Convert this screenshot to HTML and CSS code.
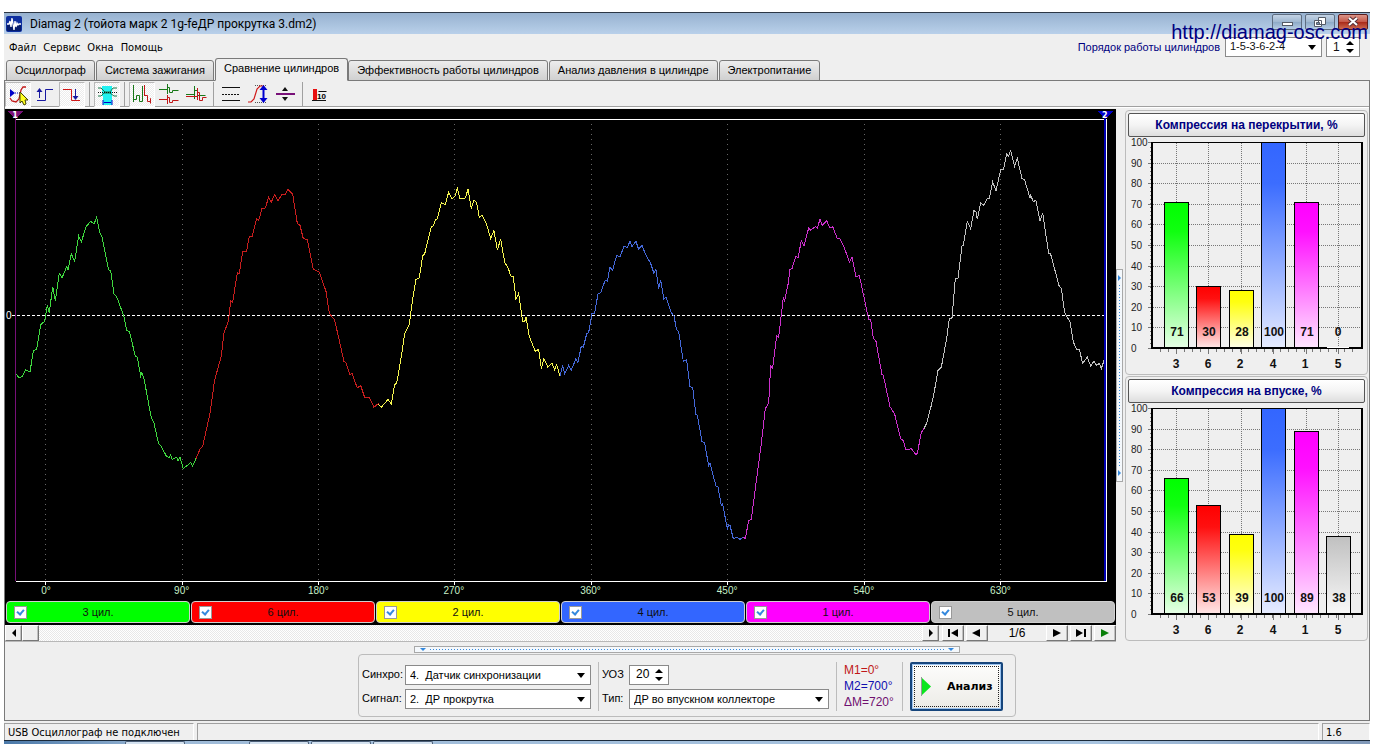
FILE: index.html
```html
<!DOCTYPE html>
<html lang="ru">
<head>
<meta charset="utf-8">
<title>Diamag 2</title>
<link rel="stylesheet" href="styles.css">
</head>
<body>
<div class="app">
  <header class="titlebar">
    <svg class="app-icon" width="16" height="16" viewBox="0 0 16 16"><rect width="16" height="16" rx="2" fill="#0d2fa0"/><rect x="1" y="9" width="14" height="6" fill="#061c6c"/><path d="M1 8h2l1-3 1 6 1-9 2 12 1-9 1 6 1-4 1 2 1-1h2" fill="none" stroke="#fff" stroke-width="1.3"/></svg>
    <h1 class="title">Diamag 2 (тойота марк 2 1g-feДР прокрутка 3.dm2)</h1>
    <div class="win-buttons">
      <button class="win-btn" aria-label="Свернуть"><svg width="28" height="14"><rect x="9.500" y="7.500" width="10" height="3" fill="#fff" stroke="#555b66"/></svg></button>
      <button class="win-btn" aria-label="Восстановить"><svg width="28" height="14"><path d="M12.500 2.500h7v7h-7zM8.500 5.500h7v6h-7z" fill="#fff" stroke="#555b66"/><path d="M10.500 7.500h3v2h-3z" fill="#7790ac" stroke="#555b66"/></svg></button>
      <button class="win-btn win-close" aria-label="Закрыть"><svg width="28" height="14"><path d="M10 3l8 7M18 3l-8 7" stroke="#553038" stroke-width="4"/><path d="M10 3l8 7M18 3l-8 7" stroke="#fff" stroke-width="2"/></svg></button>
    </div>
    <a class="watermark" href="#">http://diamag-osc.com</a>
  </header>

  <div class="menu-row">
    <nav class="menu">
      <button>Файл</button><button>Сервис</button><button>Окна</button><button>Помощь</button>
    </nav>
    <div class="order">
      <label for="order">Порядок работы цилиндров</label>
      <span class="select order-select"><select id="order"><option>1-5-3-6-2-4</option></select></span>
      <span class="spin order-spin"><input type="text" value="1" aria-label="Номер цилиндра"><span class="arrows"><button class="up" aria-label="Больше"></button><button class="down" aria-label="Меньше"></button></span></span>
    </div>
  </div>

  <div class="tabs" role="tablist">
    <button class="tab" role="tab">Осциллограф</button>
    <button class="tab" role="tab">Система зажигания</button>
    <button class="tab active" role="tab" aria-selected="true">Сравнение цилиндров</button>
    <button class="tab" role="tab">Эффективность работы цилиндров</button>
    <button class="tab" role="tab">Анализ давления в цилиндре</button>
    <button class="tab" role="tab">Электропитание</button>
  </div>

  <main class="page">
    <div class="toolbar">
      <button class="tool pressed" aria-label="Маркер"><svg width="24" height="24" viewBox="0 0 24 24"><path d="M4 6v8l5-4z" fill="#0000c8"/><path d="M9 10h6" stroke="#0000c8" stroke-dasharray="1 1"/><path d="M20 4h-3l-2 3-2 9-3 3-4-1-2-3" fill="none" stroke="#c01818" stroke-width="1.300"/><path d="M14 9v11l2-2 2 4 2-1-1-4h3z" fill="#ffff20" stroke="#444400"/></svg></button>
      <button class="tool" aria-label="Фронт"><svg width="24" height="24" viewBox="0 0 24 24"><path d="M4 18.500h8.500v-11H20M6.500 16V9" fill="none" stroke="#1818a0"/><path d="M6.500 6l3 4h-6z" fill="#1818a0"/></svg></button>
      <button class="tool pressed" aria-label="Спад"><svg width="24" height="24" viewBox="0 0 24 24"><path d="M3 6.500h8.500v11H20" fill="none" stroke="#d01818"/><path d="M15.500 6v8" stroke="#1818a0"/><path d="M15.500 17l3-4h-6z" fill="#1818a0"/></svg></button>
      <i class="sep"></i>
      <button class="tool pressed" aria-label="Область"><svg width="24" height="24" viewBox="0 0 24 24"><path d="M7 3h10v10H7zM8 13h9v9H8z" fill="#20f0f0"/><path d="M3 5h3l4 4h5l3-4h4M3 13h3l3-3h6l4 3h3" fill="none" stroke="#187848"/><path d="M3 9.500h19" stroke="#111" stroke-dasharray="1 1"/><path d="M8 17v5M17 17v5M9 19.500h7" stroke="#0000c8"/></svg></button>
      <i class="sep"></i>
      <button class="tool pressed" aria-label="Последовательно"><svg width="24" height="24" viewBox="0 0 24 24"><path d="M3.500 2v17M3.500 16.500h3v-4h3v6h3V3" fill="none" stroke="#187818"/><path d="M14.500 2v11M14.500 12.500h3v6h3v-3v5" fill="none" stroke="#c01818"/></svg></button>
      <button class="tool" aria-label="Раздельно"><svg width="24" height="24" viewBox="0 0 24 24"><path d="M2 7.500h8M10.500 2v10M10.500 5.500h2v5h3v-2h6" fill="none" stroke="#187818"/><path d="M2 17.500h8M10.500 13v9M10.500 15.500h2v5h3v-2h6" fill="none" stroke="#c01818"/></svg></button>
      <button class="tool" aria-label="Наложение"><svg width="24" height="24" viewBox="0 0 24 24"><path d="M2 12.500h8M10.500 4v13M10.500 8.500h3v5h8" fill="none" stroke="#187818"/><path d="M2 14.500h11M13.500 6v12M13.500 10.500h2v8h3v-3h4" fill="none" stroke="#c01818"/></svg></button>
      <i class="sep"></i>
      <button class="tool" aria-label="Линии"><svg width="24" height="24" viewBox="0 0 24 24"><path d="M3 5.500h18M3 18.500h18" stroke="#111"/><path d="M3 12.500h18" stroke="#111" stroke-dasharray="2 1"/></svg></button>
      <button class="tool" aria-label="Масштаб"><svg width="24" height="24" viewBox="0 0 24 24"><path d="M9 3.500h12M9 20.500h12" stroke="#555" stroke-dasharray="1 1"/><path d="M2 20h3l3-3 3-10 3-3h4" fill="none" stroke="#d01818" stroke-width="1.200"/><path d="M17.500 7v10" stroke="#0000d0" stroke-width="2"/><path d="M17.500 3l4 5h-8zM17.500 21l4-5h-8z" fill="#0000d0"/></svg></button>
      <button class="tool" aria-label="Сжать"><svg width="24" height="24" viewBox="0 0 24 24"><path d="M3 12h19" stroke="#781078" stroke-width="2"/><path d="M12 5l3 4H9zM12 19l3-4H9z" fill="#111"/></svg></button>
      <i class="sep"></i>
      <button class="tool" aria-label="Десять"><svg width="24" height="24" viewBox="0 0 24 24"><path d="M5 7h4v11H5z" fill="#e81010"/><path d="M4 18.500h14M10.500 9.500h8" stroke="#111"/><text x="9" y="17" class="ten">10</text></svg></button>
    </div>

    <div class="workspace">
      <section class="scope">
        <div class="plot">
          <svg class="wave" viewBox="5 109 1111 491" preserveAspectRatio="none">
            <g class="grid"><path d="M45.500 124V581M182.500 124V581M318.500 124V581M454.500 124V581M591.500 124V581M727.500 124V581M864.500 124V581M1000.500 124V581"/></g>
            <path class="frame" d="M45.500 581v4M182.500 581v4M318.500 581v4M454.500 581v4M591.500 581v4M727.500 581v4M864.500 581v4M1000.500 581v4"/>
            <path class="frame" d="M16 119.500H1106.500V581.500H16"/>
            <path class="zero" d="M12 315.500H1106"/>
            <path class="mark-one" d="M15.500 117V581"/>
            <path class="mark-two" d="M1105 117V581"/>
            <path d="M8 111h15l-7.500 8z" fill="#781078"/><path d="M1098 111h15l-7.500 8z" fill="#0000c8"/>
            <g class="trace" transform="translate(0 120) scale(.3333)">
              <polyline stroke="#3fd83f" points="48,762 58,774 68,768 76,750 90,756 100,692 110,688 122,614 134,604 142,556 148,578 158,500 166,542 178,460 186,474 200,440 204,450 214,402 224,424 236,348 244,366 258,320 272,304 282,312 290,292 300,340 306,352 326,450 332,452 342,522 350,530 372,590 380,632 388,634 406,708 412,712 422,768 426,758 432,776 454,894 462,910 476,972 482,976 500,1010 508,1012 512,1004 516,1018 530,1012 534,1022 540,1012 550,1046 572,1028 578,1038 588,1016"/>
              <polyline stroke="#c81e1e" points="588,1016 600,988 608,980 630,880 644,780 664,708 672,640 686,600 692,542 698,548 712,458 718,460 728,396 740,394 748,348 756,350 770,296 776,302 786,266 796,264 806,232 814,246 824,224 834,242 846,224 856,224 864,208 878,222 892,310 900,316 910,356 922,358 940,448 958,456 978,514 988,580 1004,600 1032,724 1038,728 1050,764 1056,760 1072,804 1082,796 1094,832 1108,832 1122,862 1136,850"/>
            </g>
            <g class="trace" transform="translate(360 170) scale(.3333)">
              <polyline stroke="#f6f650" points="54,702 64,712 84,688 94,702 104,644 110,640 124,560 134,490 148,462 158,386 168,328 178,324 188,258 194,252 214,170 220,168 226,150 232,146 244,98 256,104 266,66 276,88 286,76 292,54 300,86 316,84 324,58 334,116 342,90 350,98 358,142 366,136 380,164 392,206 402,182 412,240 422,208 434,276 446,298 452,318 460,320 468,388 476,370 488,456 494,456 498,440 508,500 526,544 536,538 544,596 552,566 564,592 576,580 584,600 590,584 600,618"/>
              <polyline stroke="#4468d8" points="600,618 608,586 614,612 626,586 634,600 648,566 654,578 664,528 670,532 680,492 686,488 696,430 704,430 714,372 722,368 736,330 742,334 750,292 758,300 770,256 780,260 792,230 802,232 810,214 816,230 828,214 836,238 846,226 858,256 872,280 882,310 888,298 896,356 902,330 912,388 918,382 934,428 942,438 950,480 956,484 970,574 980,570 990,650 998,652 1008,734 1012,736 1026,814 1034,818 1046,888 1050,880 1068,948 1074,950 1084,1006 1088,1002 1102,1076 1106,1064 1110,1066 1120,1106 1130,1102 1140,1108 1150,1102"/>
            </g>
            <g class="trace" transform="translate(720 130) scale(.3333)">
              <polyline stroke="#cc30cc" points="70,1222 76,1226 86,1172 94,1168 108,1060 124,940 136,836 146,820 152,708 158,714 170,618 176,622 190,502 194,512 204,464 210,418 216,416 228,378 234,384 244,332 252,348 266,294 272,300 286,290 292,294 300,268 306,286 320,272 330,294 338,290 352,326 360,326 374,356 388,396 396,382 408,440 418,436 446,568 452,570 460,624 468,634 486,734 490,736 510,830 524,852 542,926 550,932 558,960 574,956 588,974 592,970 604,908 612,896"/>
              <polyline stroke="#c0c0c0" points="612,896 620,880 634,826 642,790 654,722 664,712 680,626 688,566 696,564 706,446 714,444 726,348 730,346 742,274 752,296 762,242 768,246 772,268 782,218 792,226 802,204 808,206 818,156 828,182 842,120 850,120 860,72 866,78 872,62 884,110 892,84 906,146 914,150 930,204 932,196 940,214 948,212 960,274 968,248 986,370 992,372 1018,470 1024,474 1034,548 1050,576 1060,636 1070,658 1078,658 1088,700 1102,682 1112,708 1122,694 1130,706 1138,700 1144,716 1152,692"/>
            </g>
          </svg>
          <svg class="plot-text">
            <text x="0.9%" y="9" class="flag">1</text><text x="99%" y="9" class="flag">2</text>
            <text x="0.1%" y="42.700%" class="zero-label">0</text>
            <g class="degrees">
              <text x="3.7%" y="98.800%">0°</text><text x="15.900%" y="98.800%">90°</text><text x="28.200%" y="98.800%">180°</text><text x="40.400%" y="98.800%">270°</text><text x="52.700%" y="98.800%">360°</text><text x="65%" y="98.800%">450°</text><text x="77.300%" y="98.800%">540°</text><text x="89.600%" y="98.800%">630°</text>
            </g>
          </svg>
        </div>
        <div class="legend">
          <label class="cyl green"><input type="checkbox" checked><span>3 цил.</span></label>
          <label class="cyl red"><input type="checkbox" checked><span>6 цил.</span></label>
          <label class="cyl yellow"><input type="checkbox" checked><span>2 цил.</span></label>
          <label class="cyl blue"><input type="checkbox" checked><span>4 цил.</span></label>
          <label class="cyl magenta"><input type="checkbox" checked><span>1 цил.</span></label>
          <label class="cyl gray"><input type="checkbox" checked><span>5 цил.</span></label>
        </div>
        <div class="scroll-row">
          <div class="scrollbar">
            <button class="sb" aria-label="Влево"><svg width="8" height="8"><path d="M6 0v8L2 4z"/></svg></button>
            <button class="sb" aria-label="Ползунок"></button>
            <div class="track"></div>
            <button class="sb" aria-label="Вправо"><svg width="8" height="8"><path d="M2 0v8l4-4z"/></svg></button>
          </div>
          <button class="nav-btn" aria-label="В начало"><svg width="12" height="8"><path d="M1 0h2v8H1zM11 0v8L4 4z"/></svg></button>
          <button class="nav-btn" aria-label="Назад"><svg width="12" height="8"><path d="M9 0v8L1 4z"/></svg></button>
          <output class="page-no">1/6</output>
          <button class="nav-btn" aria-label="Вперёд"><svg width="12" height="8"><path d="M2 0v8l8-4z"/></svg></button>
          <button class="nav-btn" aria-label="В конец"><svg width="12" height="8"><path d="M1 0v8l7-4zM9 0h2v8H9z"/></svg></button>
          <button class="nav-btn" aria-label="Пуск"><svg width="12" height="8"><path d="M2 0v8l8-4z" fill="#0a800a"/></svg></button>
        </div>
      </section>

      <div class="vsplit"><div class="vgrip"><i></i><b></b><i></i></div></div>

      <aside class="charts">
        <svg class="defs" width="0" height="0">
          <defs>
            <linearGradient id="g3" x2="0" y2="1"><stop stop-color="#00ff00"/><stop offset=".2" stop-color="#10ff10"/><stop offset="1" stop-color="#e6ffe6"/></linearGradient>
            <linearGradient id="g6" x2="0" y2="1"><stop stop-color="#ff0000"/><stop offset=".2" stop-color="#ff1010"/><stop offset="1" stop-color="#ffe6e6"/></linearGradient>
            <linearGradient id="g2" x2="0" y2="1"><stop stop-color="#ffff00"/><stop offset=".2" stop-color="#ffff10"/><stop offset="1" stop-color="#ffffe6"/></linearGradient>
            <linearGradient id="g4" x2="0" y2="1"><stop stop-color="#3366ff"/><stop offset=".2" stop-color="#3c6dff"/><stop offset="1" stop-color="#e6ecff"/></linearGradient>
            <linearGradient id="g1" x2="0" y2="1"><stop stop-color="#ff00ff"/><stop offset=".2" stop-color="#ff10ff"/><stop offset="1" stop-color="#ffe6ff"/></linearGradient>
            <linearGradient id="g5" x2="0" y2="1"><stop stop-color="#c0c0c0"/><stop offset="1" stop-color="#f8f8f8"/></linearGradient>
            <symbol id="axes" viewBox="0 0 240 234">
              <path class="dots" d="M26 25.500H235M26 45.500H235M26 66.500H235M26 86.500H235M26 107.500H235M26 128.500H235M26 148.500H235M26 169.500H235M26 189.500H235M49.500 5V210M81.500 5V210M114.500 5V210M146.500 5V210M179.500 5V210M211.500 5V210"/>
              <path class="ticks" d="M21 4.500h4M21 25.500h4M21 45.500h4M21 66.500h4M21 86.500h4M21 107.500h4M21 128.500h4M21 148.500h4M21 169.500h4M21 189.500h4M21 210.500h4M49.500 211v5M81.500 211v5M114.500 211v5M146.500 211v5M179.500 211v5M211.500 211v5"/>
              <path class="minor" d="M23.500 9V208"/><path class="minor-x" d="M33 212.500H228"/>
              <g class="y-labels"><text x="4" y="8">100</text><text x="4" y="29">90</text><text x="4" y="49">80</text><text x="4" y="70">70</text><text x="4" y="90">60</text><text x="4" y="111">50</text><text x="4" y="132">40</text><text x="4" y="152">30</text><text x="4" y="173">20</text><text x="4" y="193">10</text><text x="4" y="214">0</text></g>
              <g class="x-labels"><text x="49" y="230">3</text><text x="81" y="230">6</text><text x="113" y="230">2</text><text x="146" y="230">4</text><text x="178" y="230">1</text><text x="211" y="230">5</text></g>
            </symbol>
          </defs>
        </svg>
        <section class="panel">
          <button class="panel-title">Компрессия на перекрытии, %</button>
          <svg class="bars" viewBox="0 0 240 234">
            <use href="#axes"/>
            <g class="bar"><rect x="37.500" y="64.500" width="24" height="145" fill="url(#g3)"/><rect x="69.500" y="148.500" width="24" height="61" fill="url(#g6)"/><rect x="102.500" y="152.500" width="24" height="57" fill="url(#g2)"/><rect x="134.500" y="4.500" width="24" height="205" fill="url(#g4)"/><rect x="167.500" y="64.500" width="24" height="145" fill="url(#g1)"/></g>
            <path class="box" d="M25 5V210H235V5"/><path class="box-top" d="M24 4.500H236"/>
            <path d="M200 209.500h22" stroke="#fff"/>
            <g class="values"><text x="50" y="198">71</text><text x="82" y="198">30</text><text x="115" y="198">28</text><text x="147" y="198">100</text><text x="180" y="198">71</text><text x="211" y="198">0</text></g>
          </svg>
        </section>
        <section class="panel">
          <button class="panel-title">Компрессия на впуске, %</button>
          <svg class="bars" viewBox="0 0 240 234">
            <use href="#axes"/>
            <g class="bar"><rect x="37.500" y="74.500" width="24" height="135" fill="url(#g3)"/><rect x="69.500" y="101.500" width="24" height="108" fill="url(#g6)"/><rect x="102.500" y="130.500" width="24" height="79" fill="url(#g2)"/><rect x="134.500" y="4.500" width="24" height="205" fill="url(#g4)"/><rect x="167.500" y="27.500" width="24" height="182" fill="url(#g1)"/><rect x="199.500" y="132.500" width="24" height="77" fill="url(#g5)"/></g>
            <path class="box" d="M25 5V210H235V5"/><path class="box-top" d="M24 4.500H236"/>
            <g class="values"><text x="50" y="198">66</text><text x="82" y="198">53</text><text x="115" y="198">39</text><text x="147" y="198">100</text><text x="180" y="198">89</text><text x="212" y="198">38</text></g>
          </svg>
        </section>
      </aside>
    </div>

    <div class="lower">
      <div class="hgrip"><i></i><b></b><i></i></div>
      <form class="settings">
        <div class="fields">
          <label for="sync">Синхро:</label>
          <span class="select"><select id="sync"><option>4.&nbsp;&nbsp;Датчик синхронизации</option></select></span>
          <label for="signal">Сигнал:</label>
          <span class="select"><select id="signal"><option>2.&nbsp;&nbsp;ДР прокрутка</option></select></span>
        </div>
        <i class="rule"></i>
        <div class="fields second">
          <label for="uoz">УОЗ</label>
          <span class="spin uoz-spin"><input id="uoz" type="text" value="20"><span class="arrows"><button type="button" class="up" aria-label="Больше"></button><button type="button" class="down" aria-label="Меньше"></button></span></span>
          <label for="kind">Тип:</label>
          <span class="select"><select id="kind"><option>ДР во впускном коллекторе</option></select></span>
        </div>
        <i class="rule"></i>
        <div class="marks"><span class="m1">M1=0°</span><span class="m2">M2=700°</span><span class="dm">ΔM=720°</span></div>
        <i class="rule"></i>
        <button type="button" class="analyze"><svg width="10" height="19" viewBox="0 0 10 19"><path d="M.5 0v19" stroke="#999"/><path d="M1 1l9 8.500L1 18z" fill="#0ae61e"/></svg>Анализ</button>
      </form>
    </div>
  </main>

  <footer class="status">
    <span class="cell usb">USB Осциллограф не подключен</span><span class="cell wide"></span><span class="cell ver">1.6</span>
  </footer>
  <div class="taskbar"><i></i><i></i><i></i><i></i></div>
</div>
</body>
</html>
```

FILE: styles.css
```css
* { box-sizing: border-box; }
body { margin: 0; background: #fff; font: 11px/13px "Liberation Sans", Arial, sans-serif; color: #000; }
button, input, select { font: inherit; color: inherit; margin: 0; padding: 0; border: 0; background: none; }
svg { display: block; }
.app { display: flex; flex-direction: column; min-height: 100vh; padding: 12px 12px 0 4px; }
.titlebar, .menu-row, .status, .page { background: #efefef; }

.titlebar { position: relative; display: flex; align-items: center; height: 22px; padding: 0 2px; border-top: 1px solid #2b3644; background: linear-gradient(#97b2d0, #b9d0ea); }
.title { flex: 1; margin: 0 0 0 8px; font: 12px/16px Roboto, "Noto Sans", sans-serif; }
.win-buttons { display: flex; gap: 3px; align-self: flex-start; padding-top: 1px; }
.win-btn { width: 30px; height: 16px; border: 1px solid #5e6d80; border-radius: 2px; background: linear-gradient(#c3d3e5, #9fb7d0 50%, #8da9c6 50%, #b4cce4); overflow: hidden; }
.win-close { border-color: #5a1c1c; background: linear-gradient(#dc9488, #c45646 50%, #a82818 50%, #cc6a50); }
.watermark { position: absolute; right: 2px; top: 8px; z-index: 2; font-size: 20px; line-height: 23px; color: #000080; text-decoration: none; }

.menu-row { display: flex; justify-content: space-between; height: 24px; padding: 2px 10px 0 5px; }
.menu { display: flex; gap: 7px; align-items: center; font-family: "DejaVu Sans Condensed", "DejaVu Sans", sans-serif; }
.order { display: flex; gap: 4px; align-items: center; color: #000080; }
.order-select { width: 97px; margin-left: 1px; }
.order-spin { width: 34px; }
.order select, .order input { color: #111; }

.select { position: relative; display: block; height: 20px; }
.select select { width: 100%; height: 100%; padding: 2px 20px 0 4px; appearance: none; background: #fff; border: 1px solid #8a8a8a; border-radius: 0; }
.order .select select { padding-top: 0; padding-bottom: 2px; }
.select::after { content: ""; position: absolute; right: 6px; top: 8px; border: 4px solid transparent; border-top: 5px solid #000; border-bottom: 0; pointer-events: none; }
.spin { display: flex; height: 20px; border: 1px solid #8a8a8a; background: #fff; }
.spin input { flex: 1; width: 0; padding-left: 6px; font-size: 12px; }
.arrows { display: flex; flex-direction: column; justify-content: center; gap: 4px; padding-right: 5px; }
.arrows button { width: 0; height: 0; border: 4px solid transparent; }
.arrows .up { border-bottom: 4px solid #000; border-top: 0; }
.arrows .down { border-top: 4px solid #000; border-bottom: 0; }

.tabs { display: flex; align-items: flex-end; gap: 1px; height: 23px; padding-left: 2px; background: linear-gradient(#efefef, #efefef) top / 100% 22px no-repeat #7a7a7a; }
.tab { height: 21px; padding: 0 8px 1px; border: 1px solid #7a7a7a; border-radius: 3px 3px 0 0; background: linear-gradient(#ededed, #d0d0d0); white-space: nowrap; }
.tab.active { height: 23px; padding-bottom: 3px; margin-right: -1px; border-bottom-color: #efefef; background: #efefef; }

.page { flex: 1; display: flex; flex-direction: column; border: solid #7a7a7a; border-width: 0 1px 1px; }
.toolbar { display: flex; align-items: center; gap: 1px; height: 28px; padding: 0 0 2px; background: linear-gradient(#a0a0a0, #a0a0a0) 0 25px / 100% 1px no-repeat, linear-gradient(#fff, #fff) 0 26px / 100% 1px no-repeat; }
.tool { display: grid; place-items: center; width: 26px; height: 25px; }
.pressed { background: repeating-conic-gradient(#fff 0 25%, #ececec 0 50%) 0 0 / 2px 2px; border: 1px solid #b8b8b8; border-right-color: #fff; border-bottom-color: #fff; }
.sep { width: 7px; height: 24px; background: linear-gradient(#a0a0a0, #a0a0a0) 3px 0 / 1px 100% no-repeat; }
.ten { font: bold 8px "Liberation Sans", sans-serif; }

.workspace { flex: 1; display: flex; }
.scope { flex: 1; min-width: 0; display: flex; flex-direction: column; background: #000; }
.plot { flex: 1; display: grid; grid-template-rows: minmax(0, 1fr); min-height: 300px; }
.wave, .plot-text { grid-area: 1 / 1; width: 100%; height: 100%; min-height: 0; }
.wave { shape-rendering: crispEdges; }
.wave path, .wave polyline { vector-effect: non-scaling-stroke; }
.grid path { stroke: #666; stroke-dasharray: 1 4; }
.frame { fill: none; stroke: #fff; }
.zero { stroke: #fff; stroke-dasharray: 3 2; }
.mark-one { stroke: #781078; }
.mark-two { stroke: #0000b0; stroke-width: 2; }
.trace { fill: none; }
.flag { font: bold 8px "DejaVu Sans", sans-serif; fill: #fff; text-anchor: middle; }
.zero-label { fill: #fff; font-size: 10px; }
.degrees { fill: #c8f0c8; font-size: 10px; text-anchor: middle; }

.legend { display: grid; grid-template-columns: repeat(6, 1fr); height: 25px; padding: 1px 0 2px 1px; }
.cyl { display: flex; align-items: center; margin-right: 1px; padding: 0 7px; border: 1px solid #d0d0d0; border-radius: 4px; }
.cyl span { flex: 1; padding-right: 13px; text-align: center; color: #111; }
.cyl input { position: relative; flex: none; width: 13px; height: 13px; appearance: none; background: #fff; border: 1px solid #9a9a9a; }
.cyl input:checked::after { content: ""; position: absolute; left: 3px; top: 1px; width: 3px; height: 5px; border: solid #3388dd; border-width: 0 2px 2px 0; transform: rotate(40deg); }
.green { background: #00ff00; } .red { background: #ff0000; } .yellow { background: #ffff00; }
.blue { background: #3366ff; } .magenta { background: #ff00ff; } .gray { background: #c0c0c0; }

.scroll-row { display: flex; gap: 2px; height: 17px; background: #efefef; border-bottom: 1px solid #b8b8b8; }
.scrollbar { flex: 1; display: flex; margin-right: 1px; }
.sb, .nav-btn { display: grid; place-items: center; background: #efefef; border: 1px solid #fff; border-right-color: #777; border-bottom-color: #777; box-shadow: inset -1px 0 #c0c0c0; }
.sb { width: 17px; }
.track { flex: 1; background: repeating-conic-gradient(#fff 0 25%, #e8e8e8 0 50%) 0 0 / 2px 2px; }
.nav-btn { width: 22px; }
.page-no { width: 54px; font-size: 12px; line-height: 17px; text-align: center; }

.vsplit { display: flex; align-items: center; width: 9px; }
.vgrip { display: flex; flex-direction: column; align-items: center; justify-content: space-between; width: 7px; height: 40%; padding: 5px 0; border: 1px solid #a8a8a8; background: #f4f8fc; }
.vgrip b { flex: 1; width: 1px; margin: 4px 0; background: repeating-linear-gradient(#3388dd 0 1px, transparent 1px 3px); }
.vgrip i { border: 3px solid transparent; border-left: 3px solid #3388dd; border-right: 0; }

.charts { display: flex; flex-direction: column; gap: 1px; width: 243px; margin-right: 1px; padding-top: 1px; }
.defs { position: absolute; }
.panel { padding: 2px 0 2px 1px; border: 1px solid #bcbcbc; border-radius: 4px; }
.panel-title { display: block; width: calc(100% - 3px); height: 24px; margin: 0 1px 1px; border: 1px solid #555; border-radius: 2px; background: linear-gradient(#fff, #f4f4f4 50%, #dedede); font-weight: bold; font-size: 12px; color: #000080; }
.bars { width: 240px; }
.dots { stroke: #777; stroke-dasharray: 1 1; }
.ticks { stroke: #777; }
.minor { stroke: #777; stroke-dasharray: 1 3; }
.minor-x { stroke: #777; stroke-width: 3; stroke-dasharray: 1 7; }
.y-labels { font-size: 10px; fill: #222; }
.x-labels, .values { font-size: 12px; font-weight: bold; text-anchor: middle; fill: #111; }
.bar rect { stroke: #000; }
.box { fill: none; stroke: #000; stroke-width: 2; }
.box-top { stroke: #000; }

.lower { display: flex; flex-direction: column; align-items: center; padding: 4px 0 3px; }
.hgrip { display: flex; align-items: center; width: 40%; height: 7px; padding: 0 5px; border: 1px solid #a8a8a8; background: #f4f8fc; }
.hgrip b { flex: 1; height: 1px; margin: 0 4px; background: repeating-linear-gradient(90deg, #3388dd 0 1px, transparent 1px 3px); }
.hgrip i { border: 3px solid transparent; border-top: 3px solid #3388dd; border-bottom: 0; }
.settings { display: flex; align-items: center; gap: 7px; margin-top: 1px; padding: 7px 12px 5px 3px; border: 1px solid #bcbcbc; border-radius: 4px; }
.fields { display: grid; grid-template-columns: 40px 186px; gap: 4px 3px; align-items: center; }
.second { grid-template-columns: 24px 200px; margin-left: -4px; }
.uoz-spin { width: 40px; }
.rule { width: 1px; height: 49px; background: #bcbcbc; }
.marks { display: flex; flex-direction: column; gap: 3px; width: 51px; font-size: 12px; }
.m1 { color: #c01818; } .m2 { color: #1010b0; } .dm { color: #701070; }
.analyze { display: flex; align-items: center; gap: 16px; width: 93px; height: 49px; padding-left: 9px; border: 2px solid #16457c; border-radius: 2px; outline: 1px dotted #222; outline-offset: -5px; background: linear-gradient(#fdfdfc, #ecebe6); box-shadow: inset 0 0 0 1px #9cc4f0; font: bold 11px/13px "DejaVu Sans", sans-serif; }

.status { display: flex; gap: 3px; height: 19px; padding-top: 2px; font: 11px/13px "DejaVu Sans Condensed", "DejaVu Sans", sans-serif; }
.cell { padding: 2px 3px 0; border: 1px solid #a0a0a0; border-right-color: #fff; border-bottom: 0; }
.usb { width: 190px; } .wide { flex: 1; } .ver { width: 48px; }
.taskbar { display: flex; gap: 2px; height: 4px; padding-left: 121px; border-top: 1px solid #1b2a3a; background: linear-gradient(90deg, #4a78a8, #9fbbd8 12%, #a8c4e0 80%, #8098b8); }
.taskbar i { width: 60px; border: 1px solid #4c5f78; border-bottom: 0; border-radius: 2px 2px 0 0; background: #d4e2f0; }
.taskbar i:first-child { margin-right: 62px; }
```
